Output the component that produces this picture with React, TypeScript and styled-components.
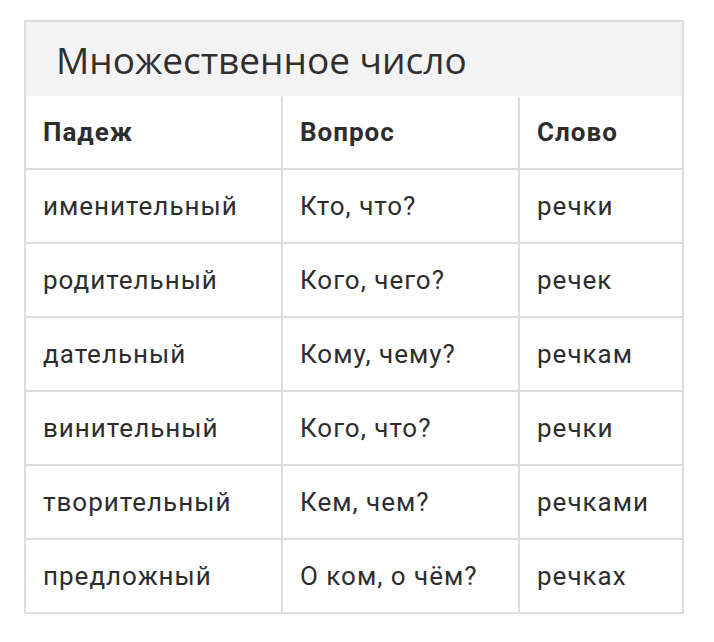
import React from "react";
import styled, { createGlobalStyle } from "styled-components";

const Global = createGlobalStyle`
  html, body { margin: 0; padding: 0; background: #ffffff; }
  body { font-family: Roboto, "Liberation Sans", sans-serif; }
`;

const Page = styled.div`
  padding: 20px 0 0 24px;
`;

const Grid = styled.div`
  width: 660px;
  box-sizing: border-box;
  display: grid;
  grid-template-columns: 255px 235px 1fr;
  grid-auto-rows: 72px;
  gap: 2px;
  padding: 2px;
  background: #dcdcdc;
`;

const Title = styled.div`
  grid-column: 1 / -1;
  height: 75px;
  background: #f3f3f3;
  display: flex;
  align-items: center;
  padding-left: 30px;
  font-family: "Open Sans", "Liberation Sans", sans-serif;
  font-size: 37px;
  color: #2f2f2f;
`;

const Cell = styled.div<{ $head?: boolean }>`
  background: #ffffff;
  display: flex;
  align-items: center;
  padding-left: 17px;
  font-family: Roboto, "Liberation Sans", sans-serif;
  font-size: 26px;
  letter-spacing: 1px;
  font-weight: ${(p) => (p.$head ? 700 : 400)};
  color: #2d2d2d;
  white-space: nowrap;
`;

const rows: [string, string, string][] = [
  ["именительный", "Кто, что?", "речки"],
  ["родительный", "Кого, чего?", "речек"],
  ["дательный", "Кому, чему?", "речкам"],
  ["винительный", "Кого, что?", "речки"],
  ["творительный", "Кем, чем?", "речками"],
  ["предложный", "О ком, о чём?", "речках"],
];

export default function App() {
  return (
    <>
      <Global />
      <Page>
        <Grid>
          <Title>Множественное число</Title>
          <Cell $head>Падеж</Cell>
          <Cell $head>Вопрос</Cell>
          <Cell $head>Слово</Cell>
          {rows.map((r, i) => (
            <React.Fragment key={i}>
              <Cell>{r[0]}</Cell>
              <Cell>{r[1]}</Cell>
              <Cell>{r[2]}</Cell>
            </React.Fragment>
          ))}
        </Grid>
      </Page>
    </>
  );
}
